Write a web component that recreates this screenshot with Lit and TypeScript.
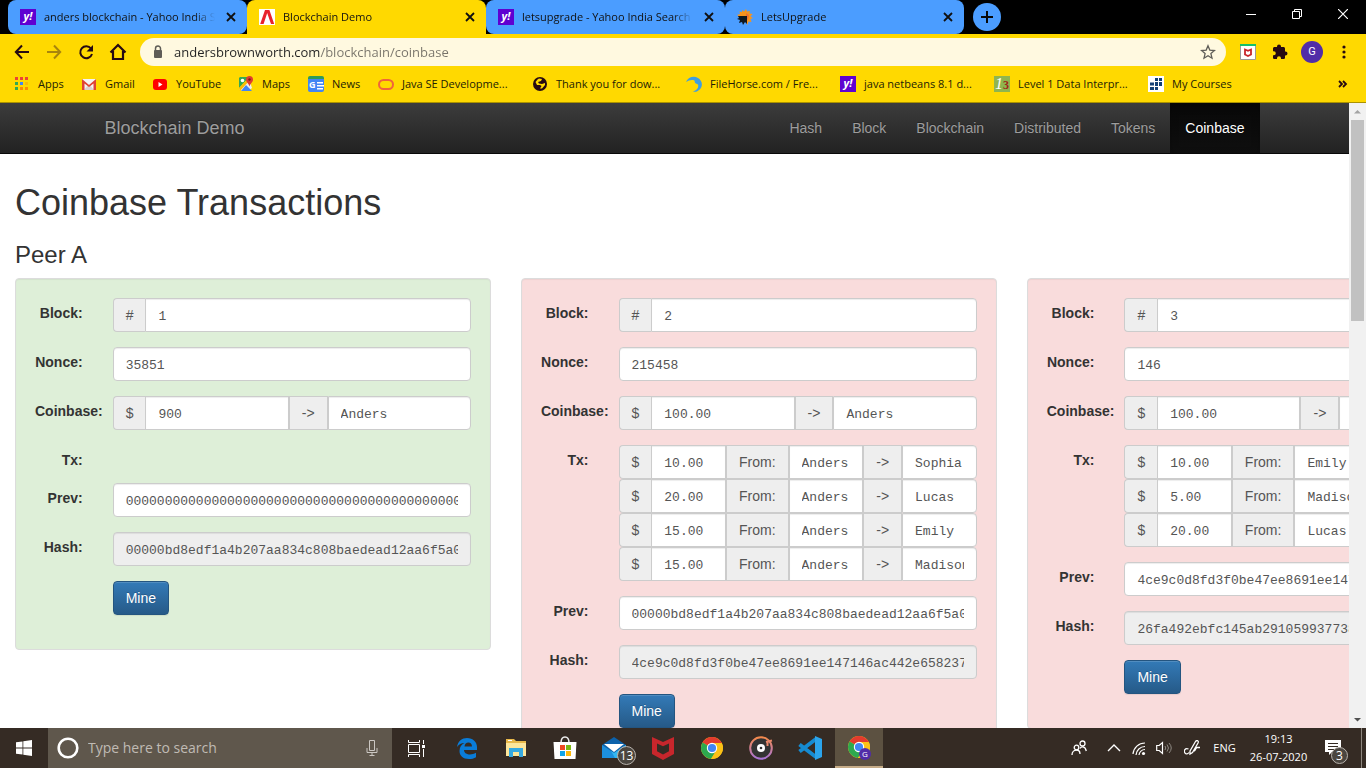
import { LitElement, html, css, svg, nothing } from "lit";
import { customElement } from "lit/decorators.js";
import { classMap } from "lit/directives/class-map.js";

interface Tx { amount: string; from: string; to: string; }
interface Block {
  id: number; nonce: string; reward: string; miner: string;
  txs: Tx[]; prev: string; hash: string; valid: boolean;
}

const blocks: Block[] = [
  {
    id: 1, nonce: "35851", reward: "900", miner: "Anders", txs: [],
    prev: "0000000000000000000000000000000000000000000000000000000000000000",
    hash: "00000bd8edf1a4b207aa834c808baedead12aa6f5a0f", valid: true,
  },
  {
    id: 2, nonce: "215458", reward: "100.00", miner: "Anders",
    txs: [
      { amount: "10.00", from: "Anders", to: "Sophia" },
      { amount: "20.00", from: "Anders", to: "Lucas" },
      { amount: "15.00", from: "Anders", to: "Emily" },
      { amount: "15.00", from: "Anders", to: "Madison" },
    ],
    prev: "00000bd8edf1a4b207aa834c808baedead12aa6f5a0f",
    hash: "4ce9c0d8fd3f0be47ee8691ee147146ac442e658237f", valid: false,
  },
  {
    id: 3, nonce: "146", reward: "100.00", miner: "Anders",
    txs: [
      { amount: "10.00", from: "Emily", to: "Jackson" },
      { amount: "5.00", from: "Madison", to: "Jackson" },
      { amount: "20.00", from: "Lucas", to: "Grace" },
    ],
    prev: "4ce9c0d8fd3f0be47ee8691ee147146ac442e658237f",
    hash: "26fa492ebfc145ab291059937738", valid: false,
  },
];

const icon = (size: number, body: unknown) =>
  html`<svg class="icon" width=${size} height=${size} viewBox="0 0 ${size} ${size}" aria-hidden="true">${body}</svg>`;

const yahoo = html`<span class="yahoo" aria-hidden="true">y!</span>`;

const closeX = icon(16, svg`<path d="M4 4l8 8M12 4l-8 8" stroke="#101010" stroke-width="1.800"/>`);

const tabs = [
  { title: "anders blockchain - Yahoo India Search", active: false, glyph: yahoo },
  {
    title: "Blockchain Demo", active: true,
    glyph: icon(16, svg`<path fill="#fff" d="M0 0h16v16H0z"/><path fill="#e8222d" d="M6 1h4.400l4.800 14h-3.200L8.200 4 4.600 15H1.200z"/>`),
  },
  { title: "letsupgrade - Yahoo India Search Results", active: false, glyph: yahoo },
  {
    title: "LetsUpgrade", active: false,
    glyph: icon(16, svg`<path fill="#f7941d" d="M5 1l2 1.500L9 0l1 2.500L13 2l-.5 2.500 3 .5-2 2.500L16 9l-2.500 1 1 3-3-.5L10.500 16 9 13V8H3L0 6l3-1-.5-2.500 2.500.5z"/><path fill="#e9573f" d="M9 4l3 2-1 5-2-2z" opacity=".6"/><path fill="#101820" d="M1 7h9v8l-2-2-2 3-1-3-3 1 1-3-3-1 2-1z"/>`),
  },
];

const chromeWheel = svg`
  <circle cx="12" cy="12" r="11" fill="#fbc116"/>
  <path fill="#e33b2e" d="M12 12L2.500 6.500A11 11 0 0 1 21.500 6.500V7H12z"/>
  <path fill="#2da94f" d="M12 12L2.500 6.500A11 11 0 0 0 11 22.950L16.300 14.500z"/>
  <path fill="#fbc116" d="M21.700 7A11 11 0 0 1 11 22.950L16.300 14.500 15 8z"/>
  <path fill="#e33b2e" d="M12 7h9.800l-.4-.8L12 5z"/>
  <circle cx="12" cy="12" r="5.200" fill="#fff"/><circle cx="12" cy="12" r="4.100" fill="#4285f4"/>`;

const bookmarks = [
  {
    name: "Apps",
    glyph: icon(16, [["#ea4335", "#ea4335", "#ea4335"], ["#34a853", "#4285f4", "#fbbc05"], ["#34a853", "#fb8c05", "#fb8c05"]]
      .flatMap((row, y) => row.map((c, x) => svg`<path fill=${c} d="M${1 + x * 5} ${1 + y * 5}h3v3h-3z"/>`))),
  },
  { name: "Gmail", glyph: icon(16, svg`<path fill="#f5f5f5" d="M1 3h14v11H1z"/><path fill="#d9d3d0" d="M3 14l5-6 5 6z"/><path fill="#e04435" d="M1 3l7 6 7-6v11h-2.500V7.500L8 11 3.500 7.500V14H1z"/>`) },
  { name: "YouTube", glyph: icon(16, svg`<rect x="1" y="3" width="14" height="11" rx="3" fill="#f00"/><path fill="#fff" d="M6.500 6v5l4-2.500z"/>`) },
  { name: "Maps", glyph: icon(16, svg`<path fill="#34a853" d="M2 1h9L1 12V2z"/><path fill="#eee" d="M11 3l3 9-4 3H4l-3-2z"/><path fill="#4285f4" d="M3 15l5-6 6 6z"/><path fill="#fbbc05" d="M1 12l9-9 1 2-9 10z"/><circle cx="4.500" cy="4.500" r="1.800" fill="#fff"/><path fill="#e03b30" d="M11.500 0a3.500 3.500 0 0 1 3.500 3.500c0 2.500-2.500 3.500-3.500 7-1-3.500-3.500-4.500-3.500-7A3.500 3.500 0 0 1 11.500 0z"/><circle cx="11.500" cy="3.500" r="1.200" fill="#7c1810"/>`) },
  { name: "News", glyph: html`<span class="news" aria-hidden="true">G${icon(16, svg`<path fill="#fff" d="M0 5h6v1.500H0zM0 8h7v1.500H0zM0 11h6v1.500H0z"/>`)}</span>` },
  { name: "Java SE Developme...", glyph: icon(16, svg`<rect x="1" y="4" width="14" height="9" rx="4.500" fill="none" stroke="#f0643c" stroke-width="2"/>`) },
  { name: "Thank you for dow...", glyph: icon(16, svg`<circle cx="8" cy="8" r="7" fill="#260a12"/><path fill="#ffd900" d="M7 2.500l3 .5-1 2-3 1 1 1.500 3 .5 3-1v2l-3 3.500H8l1.500-2.500L8 9H5L3.500 6l2-2.500z"/>`) },
  { name: "FileHorse.com / Fre...", glyph: icon(16, svg`<path fill="#3f9fe0" d="M0 6C2 1 8-.5 12 2c5 3 5 9 1 12-2 2-4 2-6 1.500 4-1.500 6-4 5-7L9 7 8.500 4.500C5 3.500 3 4.500 0 6z"/>`) },
  { name: "java netbeans 8.1 d...", glyph: yahoo },
  { name: "Level 1 Data Interpr...", glyph: html`<span class="level" aria-hidden="true"><i>1</i><b>3</b></span>` },
  { name: "My Courses", glyph: icon(16, svg`<path fill="#fff" d="M0 0h16v16H0z"/><path fill="#123f75" d="M7 2h3v3H7zM11 2h3v3h-3zM2 6.500h4v3H2zM7 6h3v4H7zM11 6h3v4h-3zM2 11h4v3H2zM7 11h3v3H7z"/>`) },
];

const mcafee = svg`<path fill="#c8262c" d="M1 1l11 5 11-5v17l-11 6-11-6z"/><path fill="#352b24" d="M6 7.500l6 2.800 6-2.800v7.800l-6 3.200-6-3.200z"/>`;

const apps = [
  { name: "Task View", glyph: icon(24, svg`<path fill="none" stroke="#fff" d="M4.500 8.500h11v8h-11zM4.500 4v2.500h11V4M4.500 21v-2.500h11V21M19.500 4v4M19.500 13v8"/><path fill="#fff" d="M18 9h3v3h-3z"/>`) },
  { name: "Edge", glyph: icon(24, svg`<path fill="#0a7cd8" d="M2 11C3 5 7 2 12 2c6 0 10 4 10 9v3H9c0 3 3 4.500 6 4.500 2 0 4-.5 6-1.700v4.400C19 22.500 16.500 23 14 23 8 23 4.500 19.500 4.500 15c0-4 2-6.500 5-8C6 7 4 8.500 2 11zm7.500-.5H17C17 8 15.500 6.500 13.400 6.500S9.700 8 9.500 10.500z"/>`) },
  { name: "File Explorer", glyph: icon(24, svg`<path fill="#e8b84a" d="M2 3h8l2 2h10v5H2z"/><path fill="#fff" d="M4 4h4v1H4z"/><path fill="#fde69b" d="M2 7h20v13H2z"/><path fill="#36a9e0" d="M5 12h14v9h-4v-5H9v5H5z"/>`) },
  { name: "Microsoft Store", glyph: icon(24, svg`<path fill="none" stroke="#eee" stroke-width="1.500" d="M8 7C8 3 9 1 12 1s4 2 4 6"/><path fill="#fff" d="M0.500 6h23L22.500 23h-21z"/><path fill="#f04a23" d="M7 9h5v5H7z"/><path fill="#7db812" d="M13 9h5v5h-5z"/><path fill="#10a4e8" d="M7 15h5v5H7z"/><path fill="#fdb90d" d="M13 15h5v5h-5z"/>`) },
  { name: "Mail", badge: "13", glyph: icon(24, svg`<path fill="#0c62ab" d="M0 9l12-8 12 8v13H0z"/><path fill="#1c8fdd" d="M0 9v13h24V9l-12 8z"/><path fill="#33b7f2" d="M24 9v13H13L9 15l3 2z"/><path fill="#fff" d="M2 8h20l-10 8z"/>`) },
  { name: "McAfee", glyph: icon(24, mcafee) },
  { name: "Chrome", glyph: icon(24, chromeWheel) },
  { name: "Groove", glyph: icon(24, svg`<defs><linearGradient id="ring" x2="0" y2="1"><stop offset="0" stop-color="#f58a4b"/><stop offset="1" stop-color="#a874d8"/></linearGradient></defs><circle cx="12" cy="12" r="10.800" fill="#333" stroke="url(#ring)" stroke-width="2"/><path fill="none" stroke="#e8876a" stroke-width="2" d="M17 6l6-1.500M18.500 6v4"/><circle cx="12" cy="12" r="4" fill="#fff"/><circle cx="12" cy="12" r="1.300" fill="#333"/>`) },
  { name: "Visual Studio Code", glyph: icon(24, svg`<path fill="none" stroke="#168bd2" stroke-width="4" d="M1.500 8.500L18 21M1.500 15.500L18 3"/><path fill="#2ba4ec" d="M17 0l7 3v18l-7 3z"/><path fill="#352b24" d="M17 7v10l-7-5z"/>`) },
  { name: "Chrome, G", active: true, glyph: icon(24, chromeWheel), small: "G" },
];

@customElement("app-root")
export class AppRoot extends LitElement {
  static styles = css`
    :host {
      display: flex; flex-direction: column; height: 100vh; overflow: hidden;
      background: #fff; color: #333;
      font: 14px/20px "Liberation Sans", Arial, sans-serif;
      --ui: "Open Sans", "Noto Sans", sans-serif;
    }
    *, *::before { box-sizing: border-box; }
    button { border: 0; padding: 0; background: none; color: inherit; font: inherit; }
    a { color: inherit; text-decoration: none; }
    input { font: inherit; color: inherit; }
    .icon { display: block; flex: none; }

    .strip { display: flex; height: 34px; padding-left: 8px; background: #000; font: 11px/16px var(--ui); color: #111; }
    .tab { display: flex; align-items: center; gap: 8px; flex: 0 1 239px; min-width: 0; padding: 0 8px 0 12px; border-radius: 8px; background: #4b9dff; }
    .tab.active { background: #ffd900; border-radius: 8px 8px 0 0; }
    .title { flex: 1; min-width: 0; overflow: hidden; white-space: nowrap; mask-image: linear-gradient(90deg, #000 88%, transparent); }
    .yahoo { flex: none; width: 16px; height: 16px; background: #5f01d1; color: #fff; font: bold italic 11px/14px "Open Sans", sans-serif; text-align: center; }
    .plus { display: grid; place-items: center; flex: none; width: 28px; height: 28px; margin: 3px 0 0 9px; border-radius: 50%; background: #4b9dff; }
    .window { display: flex; height: 28px; margin-left: auto; }
    .window button { display: grid; place-items: center; width: 46px; }

    .toolbar { display: flex; align-items: center; height: 36px; padding: 0 6px; background: #ffd900; }
    .tool { display: grid; place-items: center; flex: none; width: 32px; height: 32px; }
    .omnibox { display: flex; align-items: center; flex: 1; min-width: 0; height: 28px; margin: 0 6px; padding: 0 10px; border-radius: 14px; background: #fff9e0; }
    .url {
      flex: 1; min-width: 0; padding: 0 0 0 8px; border: 0; outline: 0; color: #222; font: 13px/20px var(--ui);
      background: linear-gradient(90deg, #222 154px, #77736a 154px); background-clip: text; -webkit-text-fill-color: transparent;
    }
    .avatar { display: grid; place-items: center; width: 22px; height: 22px; border-radius: 50%; background: #512da8; color: #fff; font: 11px/22px Roboto, sans-serif; }

    .bookmarks { display: grid; grid-template-columns: 67px 71px 86px 70px 70px repeat(5, 154px) 1fr auto; align-items: center; height: 33px; padding: 0 16px 5px 14px; border-bottom: 1px solid #ab9200; background: #ffd900; color: #221c05; font: 11px/16px var(--ui); white-space: nowrap; }
    .bookmark { display: flex; align-items: center; gap: 8px; }
    .news { display: flex; align-items: center; gap: 1px; width: 16px; height: 16px; padding-left: 1px; overflow: hidden; border-top: 3px solid #2f9c56; border-radius: 2px; background: #4285f4; color: #fff; font: bold 9px/12px "Open Sans", sans-serif; }
    .level { width: 16px; height: 16px; overflow: hidden; background: #8fb54e; color: #fff; font: 16px/16px "Liberation Serif", serif; text-align: center; }
    .level b { color: #a02818; font-size: 12px; }

    .view { display: flex; flex: 1; min-height: 0; }
    .page { flex: 1; min-width: 0; overflow: hidden; }
    .navbar { height: 51px; border-bottom: 1px solid #080808; background: linear-gradient(#3c3c3c, #222); color: #9d9d9d; text-shadow: 0 -1px 0 rgba(0, 0, 0, 0.25); }
    .container { display: flex; justify-content: space-between; max-width: 1170px; margin: 0 auto; }
    .brand { padding: 15px; font-size: 18px; }
    .links { display: flex; }
    .links a { padding: 15px; }
    .links .current { background: linear-gradient(#080808, #0f0f0f); box-shadow: inset 0 3px 9px rgba(0, 0, 0, 0.25); color: #fff; }
    h1, h2 { padding: 0 15px; font-weight: normal; }
    h1 { margin: 29px 0 19px; font-size: 36px; line-height: 40px; }
    h2 { margin: 0 0 10px; font-size: 24px; line-height: 26px; }

    .peers { display: flex; align-items: flex-start; }
    .column { flex: none; width: 37.5%; padding: 0 15px; }
    .well { padding: 19px 4px; border: 1px solid #dcdcdc; border-radius: 4px; background: #f9dcdc; box-shadow: inset 0 1px 1px rgba(0, 0, 0, 0.05); }
    .well.valid { background: #deefd8; }
    .row { display: flex; align-items: flex-start; margin-bottom: 15px; }
    .label { flex: none; width: 16.6667%; padding: 7px 15px 0; font-weight: bold; line-height: 16px; text-align: right; white-space: nowrap; }
    .field { flex: 1; min-width: 0; padding: 0 15px; }
    .group { display: flex; }
    .addon { flex: none; padding: 6px 12px; border: 1px solid #ccc; background: #eee; color: #555; }
    .addon:first-child { border-right: 0; border-radius: 4px 0 0 4px; }
    .text { display: block; flex: 1 1 0; width: 100%; min-width: 0; height: 34px; padding: 7px 12px 5px; border: 1px solid #ccc; border-radius: 4px; outline: 0; background: #fff; box-shadow: inset 0 1px 1px rgba(0, 0, 0, 0.075); color: #555; font: 13px/20px "Liberation Mono", monospace; }
    .group .text { border-radius: 0; }
    .group .text:last-child { border-radius: 0 4px 4px 0; }
    .text:read-only { background: #eee; }
    .mine { height: 34px; padding: 0 12px; border: 1px solid #245580; border-radius: 4px; background: linear-gradient(#337ab7, #265a88); box-shadow: inset 0 1px 0 rgba(255, 255, 255, 0.15), 0 1px 1px rgba(0, 0, 0, 0.075); color: #fff; text-shadow: 0 -1px 0 rgba(0, 0, 0, 0.2); }

    .scrollbar { display: flex; flex-direction: column; align-items: center; flex: none; width: 17px; background: #f1f1f1; }
    .arrow { display: grid; place-items: center; width: 17px; height: 17px; }
    .track { flex: 1; width: 13px; }
    .thumb { height: 34%; background: #c1c1c1; }

    .taskbar { display: flex; flex: none; height: 40px; background: #352b24; color: #fff; font: 11px/18px var(--ui); }
    .start { display: grid; place-items: center; width: 48px; }
    .search { display: flex; align-items: center; flex: 0 1 344px; gap: 8px; padding: 0 12px 0 8px; background: #5f574c; }
    .query { flex: 1; min-width: 0; padding: 0; border: 0; outline: 0; background: none; font-size: 14px; }
    .query::placeholder { color: #c0bbb4; opacity: 1; }
    .apps { display: flex; gap: 1px; }
    .app { position: relative; display: grid; place-items: center; width: 48px; height: 40px; }
    .app:first-child { margin-right: 2px; }
    .app.active { background: #5c5141; border-bottom: 2px solid #c6ac88; }
    .badge { position: absolute; display: grid; place-items: center; width: 19px; height: 19px; border: 1px solid #b8b3ad; border-radius: 50%; background: #4b4640; font-size: 12px; line-height: 16px; }
    .badge.mail { left: 27px; top: 18px; }
    .badge.profile { left: 24px; top: 20px; width: 12px; height: 12px; border: 0; background: #512da8; font-size: 8px; line-height: 12px; }
    .badge.notes { left: 16px; top: 19px; width: 17px; height: 17px; }
    .tray { display: flex; align-items: center; margin-left: auto; }
    .tray button { display: grid; place-items: center; height: 40px; }
    .people { width: 44px; }
    .status { width: 25px; }
    .pen { width: 31px; }
    .lang { width: 35px; }
    .clock { width: 73px; text-align: center; }
    .tray .notes-button { position: relative; width: 46px; padding-right: 10px; }
    .desktop { width: 5px; border-left: 1px solid #8d867e; }
  `;

  private browser() {
    return html`
      <header>
        <div class="strip">
          ${tabs.map((t) => html`<div class=${classMap({ tab: true, active: t.active })}>${t.glyph}<span class="title">${t.title}</span><button aria-label="Close tab">${closeX}</button></div>`)}
          <button class="plus" aria-label="New tab">${icon(14, svg`<path d="M7 1v12M1 7h12" stroke="#080808" stroke-width="2"/>`)}</button>
          <div class="window">
            <button aria-label="Minimize">${icon(10, svg`<path d="M0 5.500h10" stroke="#fff"/>`)}</button>
            <button aria-label="Restore">${icon(10, svg`<path d="M.5 2.500h7v7h-7zM2.500 2V.500h7v7H8" fill="none" stroke="#fff"/>`)}</button>
            <button aria-label="Close">${icon(10, svg`<path d="M0 0l10 10M10 0L0 10" stroke="#fff" stroke-width="1.200"/>`)}</button>
          </div>
        </div>
        <div class="toolbar">
          <button class="tool" aria-label="Back">${icon(16, svg`<path d="M15 8H2M8 1.500L1.800 8 8 14.500" fill="none" stroke="#260a12" stroke-width="2"/>`)}</button>
          <button class="tool" aria-label="Forward">${icon(16, svg`<path d="M1 8h13M8 1.500L14.200 8 8 14.500" fill="none" stroke="#a8850d" stroke-width="2"/>`)}</button>
          <button class="tool" aria-label="Reload">${icon(16, svg`<path d="M13 4.500A6 6 0 1 0 14 10" fill="none" stroke="#260a12" stroke-width="2"/><path d="M15 1v6.500H8.500z" fill="#260a12"/>`)}</button>
          <button class="tool" aria-label="Home">${icon(18, svg`<path d="M1.500 9.500L9 2l7.500 7.500M4 8v8h10V8" fill="none" stroke="#260a12" stroke-width="2.200"/>`)}</button>
          <div class="omnibox">
            ${icon(16, svg`<rect x="4" y="6" width="8" height="8" rx="1" fill="#5f5d57"/><path d="M5.500 7V4.500a2.500 2.500 0 0 1 5 0V7" fill="none" stroke="#5f5d57" stroke-width="1.500"/>`)}
            <input class="url" aria-label="Address" .value=${"andersbrownworth.com/blockchain/coinbase"} />
            ${icon(16, svg`<path d="M8 1.800l1.800 4.300 4.700.4-3.600 3.100 1.100 4.600L8 11.700l-4 2.500 1.100-4.600L1.500 6.500l4.700-.4z" fill="none" stroke="#5f5d57" stroke-width="1.300"/>`)}
          </div>
          <button class="tool" aria-label="WebAdvisor">${icon(16, svg`<path fill="#fff" stroke="#9a9a9a" d="M.5.500h15v15H.5z"/><path fill="#13c06a" d="M0 0h16v2H0z"/><path d="M5 5.500l3 1.300 3-1.300v5L8 12l-3-1.500z" fill="none" stroke="#c8262c" stroke-width="1.800"/>`)}</button>
          <button class="tool" aria-label="Extensions">${icon(16, svg`<path fill="#260a12" d="M13.500 7.500H13V4.500C13 3.700 12.300 3 11.500 3H9V2.500a2 2 0 0 0-4 0V3H2.500C1.700 3 1 3.700 1 4.500v2.700h.8a1.900 1.900 0 0 1 0 4H1v2.500c0 .8.700 1.300 1.500 1.300H5v-.7a1.900 1.900 0 0 1 4 0v.7h2.500c.8 0 1.500-.5 1.500-1.300V11.500h.5a2 2 0 0 0 0-4z"/>`)}</button>
          <button class="tool" aria-label="Profile"><span class="avatar">G</span></button>
          <button class="tool" aria-label="Menu">${icon(16, svg`<g fill="#260a12"><circle cx="8" cy="3" r="1.600"/><circle cx="8" cy="8" r="1.600"/><circle cx="8" cy="13" r="1.600"/></g>`)}</button>
        </div>
        <nav class="bookmarks" aria-label="Bookmarks">
          ${bookmarks.map((b) => html`<a class="bookmark" href="#">${b.glyph}<span>${b.name}</span></a>`)}
          <button aria-label="More bookmarks">${icon(16, svg`<path d="M5 5l3 3-3 3M9 5l3 3-3 3" fill="none" stroke="#260a12" stroke-width="1.800"/>`)}</button>
        </nav>
      </header>`;
  }

  private block(b: Block) {
    const id = (name: string) => `${name}-${b.id}`;
    return html`
      <div class="column">
        <form class=${classMap({ well: true, valid: b.valid })}>
          <div class="row">
            <label class="label" for=${id("block")}>Block:</label>
            <div class="field group"><span class="addon">#</span><input class="text" id=${id("block")} .value=${String(b.id)} /></div>
          </div>
          <div class="row">
            <label class="label" for=${id("nonce")}>Nonce:</label>
            <div class="field"><input class="text" id=${id("nonce")} .value=${b.nonce} /></div>
          </div>
          <div class="row">
            <label class="label" for=${id("coinbase")}>Coinbase:</label>
            <div class="field group">
              <span class="addon">$</span><input class="text" id=${id("coinbase")} .value=${b.reward} />
              <span class="addon">-&gt;</span><input class="text" aria-label="Coinbase recipient" .value=${b.miner} />
            </div>
          </div>
          <div class="row">
            <span class="label" id=${id("tx")}>Tx:</span>
            <div class="field" role="group" aria-labelledby=${id("tx")}>
              ${b.txs.map((t) => html`
                <div class="group">
                  <span class="addon">$</span><input class="text" aria-label="Amount" .value=${t.amount} />
                  <span class="addon">From:</span><input class="text" aria-label="Sender" .value=${t.from} />
                  <span class="addon">-&gt;</span><input class="text" aria-label="Recipient" .value=${t.to} />
                </div>`)}
            </div>
          </div>
          <div class="row">
            <label class="label" for=${id("prev")}>Prev:</label>
            <div class="field"><input class="text" id=${id("prev")} .value=${b.prev} /></div>
          </div>
          <div class="row">
            <label class="label" for=${id("hash")}>Hash:</label>
            <div class="field"><input class="text" id=${id("hash")} readonly .value=${b.hash} /></div>
          </div>
          <div class="row">
            <span class="label"></span>
            <div class="field"><button class="mine" type="button">Mine</button></div>
          </div>
        </form>
      </div>`;
  }

  private taskbar() {
    return html`
      <footer class="taskbar">
        <button class="start" aria-label="Start">${icon(16, svg`<path fill="#fff" d="M0 2.300l6.500-.9v6.200H0zM7.300 1.300L16 0v7.600H7.300zM0 8.400h6.500v6.200L0 13.700zM7.300 8.400H16V16l-8.700-1.300z"/>`)}</button>
        <div class="search">
          ${icon(24, svg`<circle cx="12" cy="12" r="9.300" fill="none" stroke="#fff" stroke-width="2.600"/>`)}
          <input class="query" aria-label="Search" placeholder="Type here to search" />
          ${icon(16, svg`<path d="M5.500.500h5v10h-5zM3 8v4.500h10V8M8 12.500V16M5.500 15.500h5" fill="none" stroke="#cbc7c2"/>`)}
        </div>
        <div class="apps">
          ${apps.map((a) => html`<button class=${classMap({ app: true, active: !!a.active })} aria-label=${a.name}>${a.glyph}${a.badge ? html`<span class="badge mail">${a.badge}</span>` : nothing}${a.small ? html`<span class="badge profile">${a.small}</span>` : nothing}</button>`)}
        </div>
        <div class="tray">
          <button class="people" aria-label="People">${icon(16, svg`<g fill="none" stroke="#fff" stroke-width="1.300"><circle cx="5.500" cy="7.500" r="2.300"/><circle cx="11.500" cy="3.500" r="2.500"/><path d="M1 15c0-3 2-5 4.500-5S9 12 9 14M9 8.500c1-2 5-3 6.300 2.500"/></g>`)}</button>
          <button class="status" aria-label="Hidden icons">${icon(16, svg`<path d="M2 11l6-6 6 6" fill="none" stroke="#fff" stroke-width="1.400"/>`)}</button>
          <button class="status" aria-label="Network">${icon(16, svg`<g fill="none" stroke="#fff" stroke-width="1.200"><path d="M2 14A12 12 0 0 1 14 3"/><path d="M5 15a9 9 0 0 1 9-8.500M8 15a6 6 0 0 1 6-5.500"/></g><circle cx="12.500" cy="13.500" r="1.600" fill="#fff"/>`)}</button>
          <button class="status" aria-label="Volume">${icon(16, svg`<path d="M.7 5.500h2.500L6.500 2.500v11L3.200 10.500H.7z" fill="none" stroke="#fff" stroke-width="1.200"/><path d="M9 6q1.500 2 0 4M11 4.500q3 3.500 0 7M13 3q4.500 5 0 10" fill="none" stroke="#8f8a84"/>`)}</button>
          <button class="pen" aria-label="Windows Ink">${icon(16, svg`<path d="M6 11L11.500 1.500c1.500-2 3.500-.5 2.500 1.500L8.500 12.500 6 14zM4.500 9C1 7.500-.5 11 1 13c1 1.500 3 1 4-.5M10 11c2 0 1-3 3-3.500h3" fill="none" stroke="#fff" stroke-width="1.300"/>`)}</button>
          <button class="lang">ENG</button>
          <div class="clock"><div>19:13</div><div>26-07-2020</div></div>
          <button class="notes-button" aria-label="Notifications">${icon(16, svg`<path fill="#fff" d="M0 0h16v12H7l-3 3v-3H0z"/><path stroke="#352b24" d="M3 3.500h10M3 6.500h10M3 9.500h7"/>`)}<span class="badge notes">3</span></button>
          <button class="desktop" aria-label="Show desktop"></button>
        </div>
      </footer>`;
  }

  render() {
    return html`
      ${this.browser()}
      <div class="view">
        <main class="page">
          <nav class="navbar">
            <div class="container">
              <a class="brand" href="#">Blockchain Demo</a>
              <div class="links">
                ${["Hash", "Block", "Blockchain", "Distributed", "Tokens", "Coinbase"].map(
                  (l) => html`<a class=${classMap({ current: l === "Coinbase" })} href="#">${l}</a>`)}
              </div>
            </div>
          </nav>
          <h1>Coinbase Transactions</h1>
          <h2>Peer A</h2>
          <div class="peers">${blocks.map((b) => this.block(b))}</div>
        </main>
        <div class="scrollbar" aria-hidden="true">
          <div class="arrow">${icon(7, svg`<path d="M0 5.500h7L3.500 2z" fill="#a3a3a3"/>`)}</div>
          <div class="track"><div class="thumb"></div></div>
          <div class="arrow">${icon(7, svg`<path d="M0 2h7L3.500 5.500z" fill="#505050"/>`)}</div>
        </div>
      </div>
      ${this.taskbar()}`;
  }
}
